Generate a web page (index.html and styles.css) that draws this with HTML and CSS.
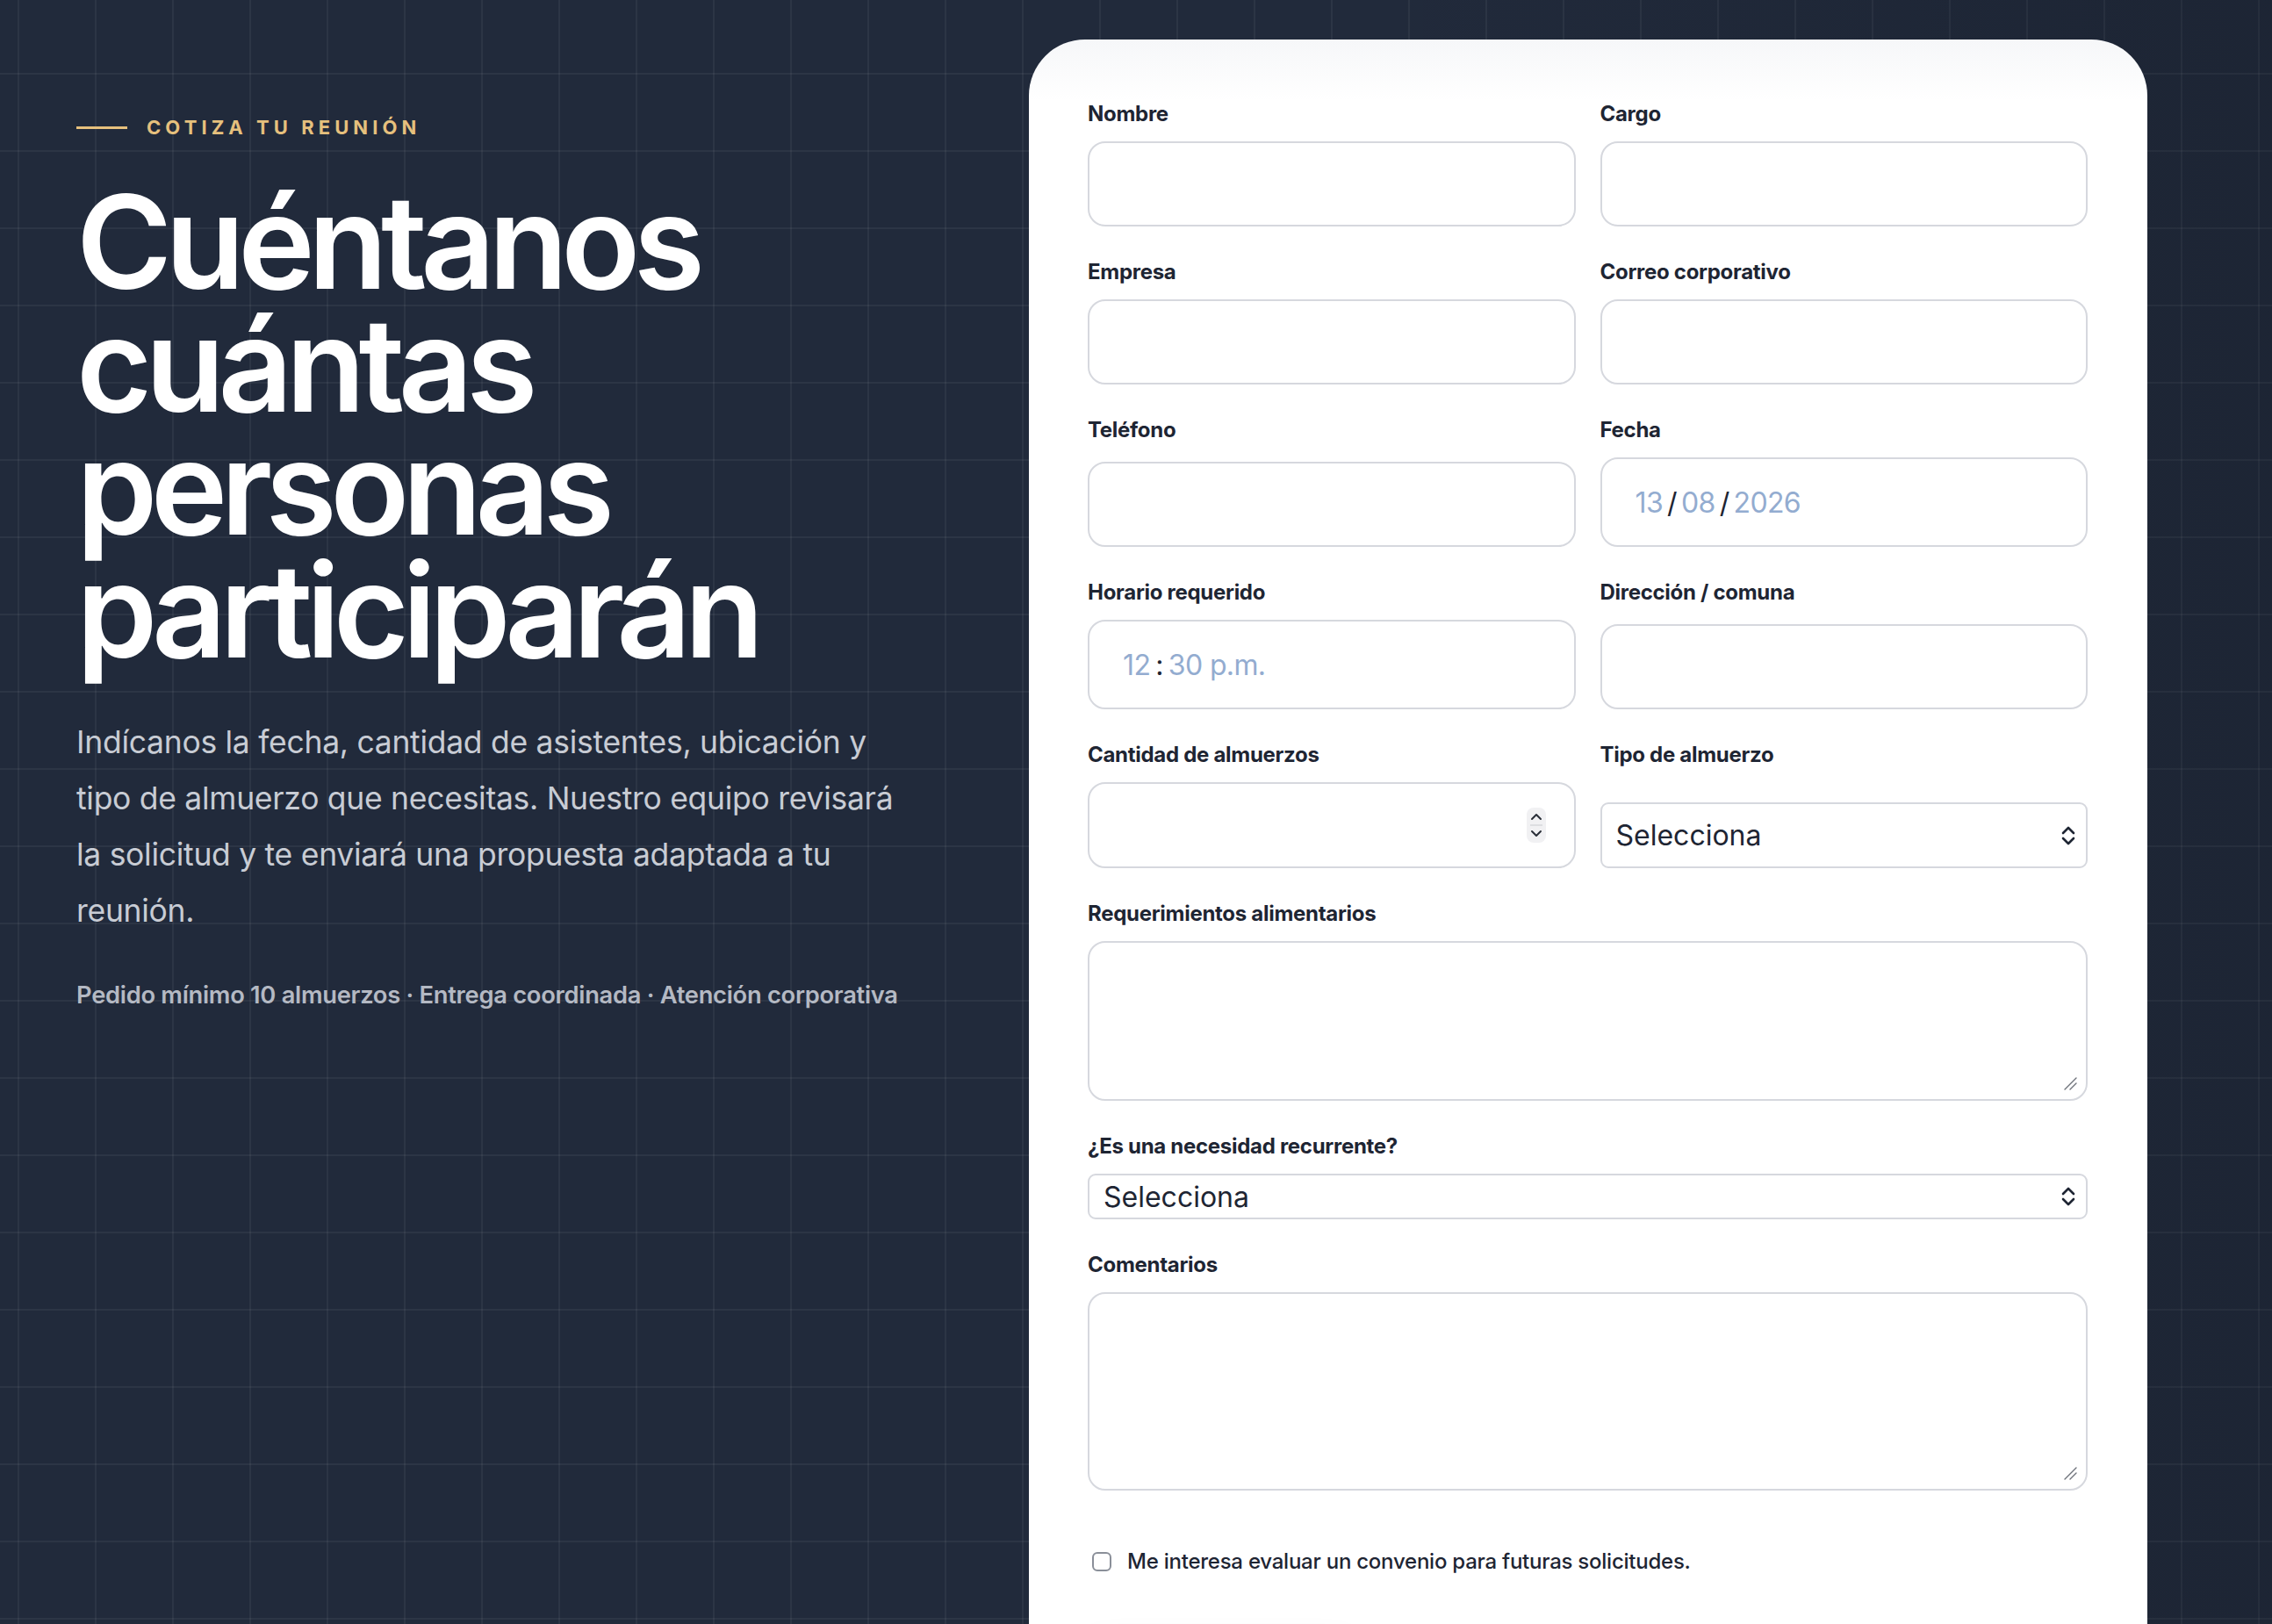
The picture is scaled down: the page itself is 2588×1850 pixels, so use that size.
FILE: index.html
```html
<!DOCTYPE html>
<html lang="es">
<head>
    <meta charset="utf-8">
    <title>Cotiza tu reunión</title>
    <link rel="stylesheet" href="styles.css">
</head>
<body>
    <main class="quote">
        <section class="intro">
            <p class="eyebrow"><span class="eyebrow-line"></span>Cotiza tu reunión</p>
            <h1>Cuéntanos cuántas personas participarán</h1>
            <p class="lead">Indícanos la fecha, cantidad de asistentes, ubicación y tipo de almuerzo que necesitas. Nuestro equipo revisará la solicitud y te enviará una propuesta adaptada a tu reunión.</p>
            <p class="meta">Pedido mínimo 10 almuerzos · Entrega coordinada · Atención corporativa</p>
        </section>

        <!-- Quote request form -->
        <form class="quote-card">
            <div class="field-grid">
                <label class="field">
                    <span class="field-label">Nombre</span>
                    <input class="control" type="text" name="nombre">
                </label>
                <label class="field">
                    <span class="field-label">Cargo</span>
                    <input class="control" type="text" name="cargo">
                </label>
                <label class="field">
                    <span class="field-label">Empresa</span>
                    <input class="control" type="text" name="empresa">
                </label>
                <label class="field">
                    <span class="field-label">Correo corporativo</span>
                    <input class="control" type="email" name="correo">
                </label>
                <label class="field">
                    <span class="field-label">Teléfono</span>
                    <input class="control" type="tel" name="telefono">
                </label>
                <div class="field">
                    <span class="field-label">Fecha</span>
                    <div class="control control-tall segmented">
                        <span class="seg">13</span><span class="sep">/</span><span class="seg">08</span><span class="sep">/</span><span class="seg">2026</span>
                    </div>
                </div>
                <div class="field">
                    <span class="field-label">Horario requerido</span>
                    <div class="control control-tall segmented">
                        <span class="seg">12</span><span class="sep sep-colon">:</span><span class="seg">30 p.m.</span>
                    </div>
                </div>
                <label class="field">
                    <span class="field-label">Dirección / comuna</span>
                    <input class="control" type="text" name="direccion">
                </label>
                <label class="field">
                    <span class="field-label">Cantidad de almuerzos</span>
                    <span class="control-wrap">
                        <input class="control control-number" type="text" inputmode="numeric" name="cantidad">
                        <span class="spinner">
                            <svg width="22" height="40" viewBox="0 0 22 40">
                                <path d="M6 13 L11 8 L16 13" fill="none" stroke="#2a2f38" stroke-width="2" stroke-linecap="round" stroke-linejoin="round"/>
                                <line x1="4" y1="20" x2="18" y2="20" stroke="#d6d7db" stroke-width="1.5"/>
                                <path d="M6 27 L11 32 L16 27" fill="none" stroke="#2a2f38" stroke-width="2" stroke-linecap="round" stroke-linejoin="round"/>
                            </svg>
                        </span>
                    </span>
                </label>
                <label class="field">
                    <span class="field-label">Tipo de almuerzo</span>
                    <span class="control-wrap">
                        <select class="control select select-lg" name="tipo">
                            <option>Selecciona</option>
                        </select>
                        <svg class="chevrons" width="18" height="28" viewBox="0 0 18 28">
                            <path d="M3 11 L9 5 L15 11 M3 17 L9 23 L15 17" fill="none" stroke="#1e2533" stroke-width="2.6" stroke-linecap="round" stroke-linejoin="round"/>
                        </svg>
                    </span>
                </label>
                <label class="field field-wide">
                    <span class="field-label">Requerimientos alimentarios</span>
                    <span class="control-wrap">
                        <textarea class="control textarea textarea-sm" name="requerimientos"></textarea>
                        <svg class="grip" width="16" height="16" viewBox="0 0 16 16">
                            <path d="M15 2 L2 15 M15 8 L8 15" fill="none" stroke="#6f737b" stroke-width="1.4" stroke-linecap="round"/>
                        </svg>
                    </span>
                </label>
                <label class="field field-wide">
                    <span class="field-label">¿Es una necesidad recurrente?</span>
                    <span class="control-wrap">
                        <select class="control select select-sm" name="recurrente">
                            <option>Selecciona</option>
                        </select>
                        <svg class="chevrons" width="18" height="28" viewBox="0 0 18 28">
                            <path d="M3 11 L9 5 L15 11 M3 17 L9 23 L15 17" fill="none" stroke="#1e2533" stroke-width="2.6" stroke-linecap="round" stroke-linejoin="round"/>
                        </svg>
                    </span>
                </label>
                <label class="field field-wide">
                    <span class="field-label">Comentarios</span>
                    <span class="control-wrap">
                        <textarea class="control textarea textarea-lg" name="comentarios"></textarea>
                        <svg class="grip" width="16" height="16" viewBox="0 0 16 16">
                            <path d="M15 2 L2 15 M15 8 L8 15" fill="none" stroke="#6f737b" stroke-width="1.4" stroke-linecap="round"/>
                        </svg>
                    </span>
                </label>
            </div>

            <label class="check-row">
                <input class="check" type="checkbox" name="convenio">
                <span>Me interesa evaluar un convenio para futuras solicitudes.</span>
            </label>

            <button class="submit-btn" type="submit">Enviar solicitud</button>
        </form>
    </main>
</body>
</html>
```

FILE: styles.css
```css
html {
    background-color: #212a3b;
}
body {
    margin: 0;
    font-family: Inter, 'Noto Sans', sans-serif;
    color: #1e2533;
    background-color: #212a3b;
    background-image:
        linear-gradient(90deg, rgba(10,14,22,0) 60%, rgba(10,14,22,0.18) 100%),
        linear-gradient(90deg, rgba(255,255,255,0.05) 2px, transparent 2px),
        linear-gradient(rgba(255,255,255,0.05) 2px, transparent 2px);
    background-size: 100% 100%, 88px 88px, 88px 88px;
    background-position: 0 0, 20px 83px, 20px 83px;
    min-height: 1850px;
}
.quote {
    display: grid;
    grid-template-columns: 1fr 1274px;
    column-gap: 40px;
    padding: 45px 142px 0 87px;
}

/* Left column */
.intro {
    padding-top: 87px;
}
.eyebrow {
    display: flex;
    align-items: center;
    gap: 22px;
    margin: 0;
    color: #e6c07d;
    font-size: 22px;
    line-height: 26px;
    font-weight: 700;
    letter-spacing: 0.23em;
    text-transform: uppercase;
}
.eyebrow-line {
    width: 58px;
    height: 3px;
    background-color: #e6c07d;
}
h1 {
    margin: 48px 0 0 0;
    max-width: 1000px;
    color: #fff;
    font-size: 148px;
    line-height: 140px;
    font-weight: 600;
    letter-spacing: -0.052em;
}
.lead {
    margin: 48px 0 0 0;
    max-width: 948px;
    color: #c8ccd4;
    font-size: 35.5px;
    line-height: 64px;
    letter-spacing: -0.008em;
}
.meta {
    margin: 46px 0 0 0;
    color: #b4b9c3;
    font-size: 27.3px;
    line-height: 36px;
    font-weight: 600;
    letter-spacing: -0.01em;
}

/* Form card */
.quote-card {
    background: linear-gradient(180deg, #f6f7f9 0, #fff 70px);
    border-radius: 64px;
    padding: 70px 68px 120px 67px;
}
.field-grid {
    display: grid;
    grid-template-columns: 1fr 1fr;
    column-gap: 28px;
    row-gap: 37px;
}
.field {
    display: flex;
    flex-direction: column;
    gap: 16px;
}
.field-wide {
    grid-column: 1 / -1;
}
.field-label {
    font-size: 24px;
    line-height: 30px;
    font-weight: 700;
    color: #1e2533;
    letter-spacing: -0.012em;
}
.field > .control,
.field > .control-wrap {
    margin-top: auto;
}
.control {
    display: block;
    box-sizing: border-box;
    width: 100%;
    height: 97px;
    margin: 0;
    padding: 0 24px;
    border: 2px solid #d6d8de;
    border-radius: 20px;
    background-color: #fff;
    font-family: inherit;
    font-size: 32px;
    color: #1e2533;
    outline: none;
}
.control-tall {
    height: 102px;
}
.control-wrap {
    position: relative;
    display: block;
}

/* Date and time entries */
.segmented {
    display: flex;
    align-items: center;
    padding-left: 38px;
    font-size: 32px;
    letter-spacing: -0.02em;
}
.seg {
    color: #93acd0;
}
.sep {
    color: #1e2533;
    margin: 0 5px;
}
.sep-colon {
    margin: 0 6px;
}

.control-number {
    height: 98px;
}
.spinner {
    position: absolute;
    right: 34px;
    top: 50%;
    width: 22px;
    height: 40px;
    margin-top: -20px;
    border-radius: 8px;
    background-color: #f1f1f3;
    line-height: 0;
}

.select {
    -webkit-appearance: none;
    appearance: none;
    padding: 0 16px;
    border-radius: 9px;
}
.select-lg {
    height: 75px;
}
.select-sm {
    height: 52px;
}
.chevrons {
    position: absolute;
    right: 13px;
    top: 50%;
    margin-top: -14px;
    pointer-events: none;
}

.textarea {
    resize: none;
    padding: 20px 24px;
}
.textarea-sm {
    height: 182px;
}
.textarea-lg {
    height: 226px;
}
.grip {
    position: absolute;
    right: 12px;
    bottom: 12px;
    pointer-events: none;
}

.check-row {
    display: flex;
    align-items: center;
    gap: 18px;
    margin-top: 66px;
    padding-left: 5px;
    font-size: 24px;
    line-height: 30px;
    font-weight: 500;
    color: #1e2533;
    letter-spacing: -0.01em;
}
.check {
    -webkit-appearance: none;
    appearance: none;
    width: 22px;
    height: 22px;
    margin: 0;
    border: 2px solid #8a8f99;
    border-radius: 6px;
    background: #fff;
}

.submit-btn {
    display: block;
    margin-top: 72px;
    padding: 28px 56px;
    border: none;
    border-radius: 20px;
    background-color: #212a3b;
    color: #fff;
    font-family: inherit;
    font-size: 26px;
    font-weight: 600;
    box-shadow: 0 14px 40px rgba(17,24,39,0.14);
}
```
